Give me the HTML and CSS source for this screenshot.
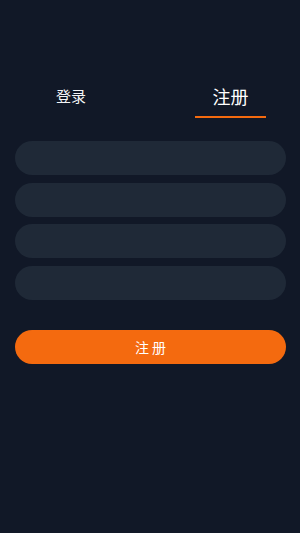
FILE: index.html
```html
<!DOCTYPE html>
<html lang="zh">
<head>
<meta charset="utf-8">
<link rel="stylesheet" href="styles.css">
</head>
<body>
<div class="page">
  <div class="tabs">
    <div class="tab">登录</div>
    <div class="tab active">注册</div>
  </div>
  <form class="form">
    <input class="field" type="text">
    <input class="field" type="password">
    <input class="field" type="password">
    <input class="field" type="text">
    <button class="submit" type="button">注册</button>
  </form>
</div>
</body>
</html>
```
FILE: styles.css
```css
html, body {
  margin: 0;
  padding: 0;
  background: #111827;
  font-family: "Noto Sans CJK SC", "Noto Sans", sans-serif;
}
.page {
  width: 300px;
  height: 533px;
  box-sizing: border-box;
  padding-top: 84px;
}
.tabs {
  display: flex;
  justify-content: space-between;
  padding: 0 34px 0 36px;
}
.tab {
  width: 70px;
  height: 24px;
  line-height: 24px;
  text-align: center;
  color: #f3f4f6;
  font-size: 15px;
  padding-bottom: 10px;
  position: relative;
}
.tab.active {
  width: 71px;
  font-size: 18px;
  color: #ffffff;
}
.tab.active::after {
  content: "";
  position: absolute;
  left: 0;
  right: 0;
  bottom: 0;
  height: 2px;
  background: #f46a0f;
}
.form {
  display: flex;
  flex-direction: column;
  padding: 23px 14px 0 15px;
  margin: 0;
}
.field {
  height: 34px;
  border: none;
  border-radius: 17px;
  background: #1f2937;
  margin: 0 0 7.5px 0;
  padding: 0 16px;
  outline: none;
  box-sizing: border-box;
}
.submit {
  margin-top: 23px;
  height: 34px;
  border: none;
  border-radius: 17px;
  background: #f46a0f;
  color: #ffffff;
  font-family: inherit;
  font-size: 14px;
  letter-spacing: 3px;
  padding: 0 0 0 3px;
}
```
